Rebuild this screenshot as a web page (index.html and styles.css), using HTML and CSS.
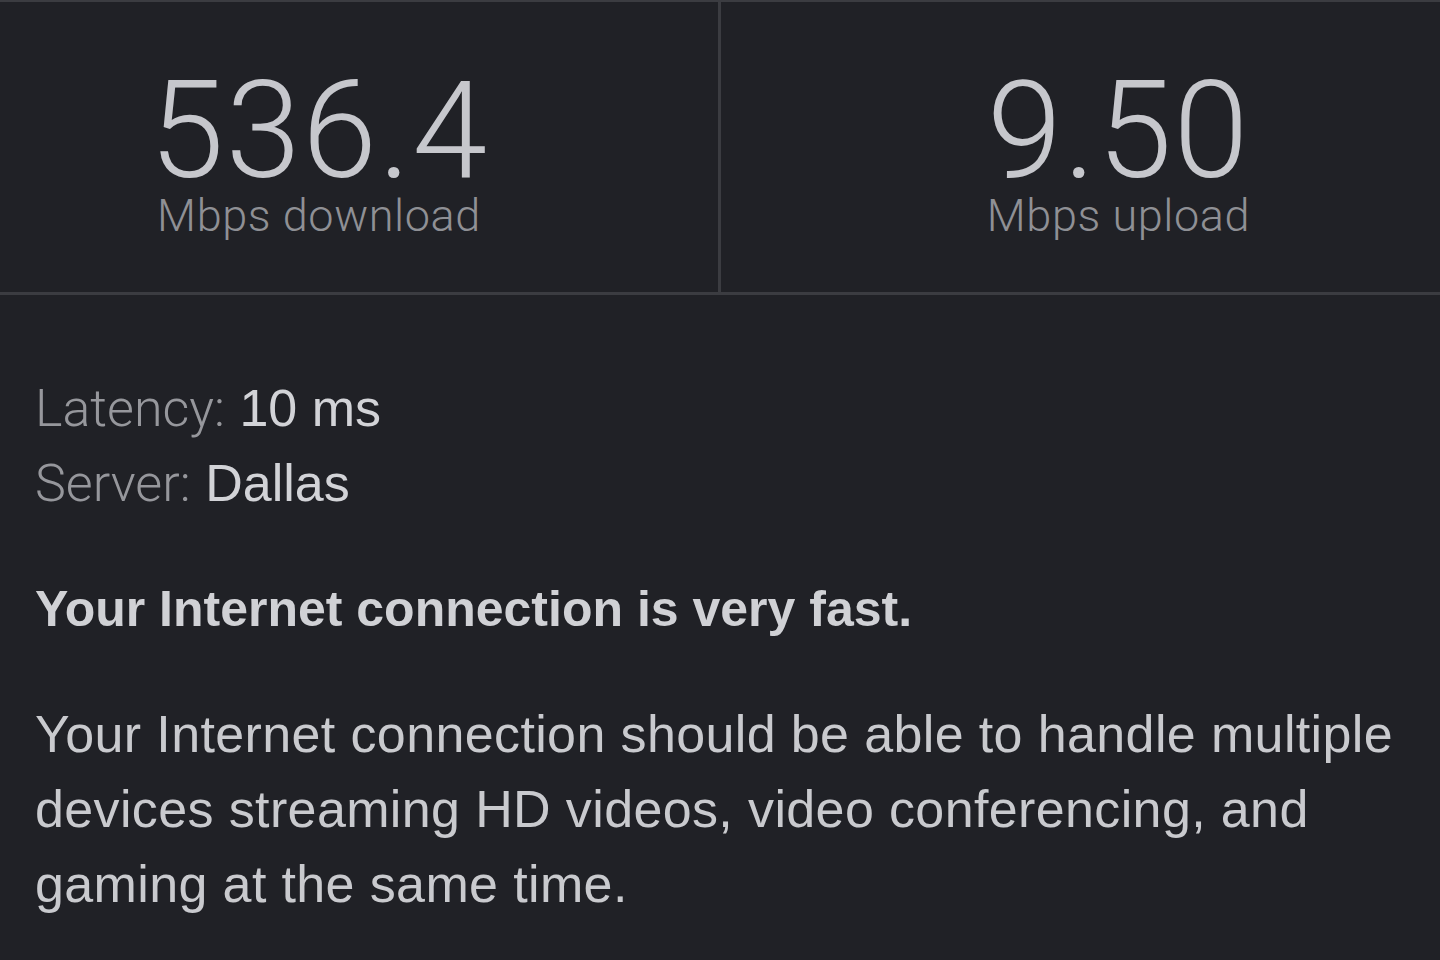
FILE: index.html
```html
<!DOCTYPE html>
<html lang="en">
<head>
<meta charset="utf-8">
<title>Speed test result</title>
<link rel="stylesheet" href="styles.css">
</head>
<body>
<main class="result">
  <section class="stats">
    <div class="stat stat-down">
      <div class="stat-value">536.4</div>
      <div class="stat-label">Mbps download</div>
    </div>
    <div class="stat stat-up">
      <div class="stat-value">9.50</div>
      <div class="stat-label">Mbps upload</div>
    </div>
  </section>
  <section class="details">
    <div class="meta">
      <div class="meta-row"><span class="meta-key">Latency:</span> <span class="meta-val">10 ms</span></div>
      <div class="meta-row"><span class="meta-key">Server:</span> <span class="meta-val">Dallas</span></div>
    </div>
    <h2 class="verdict">Your Internet connection is very fast.</h2>
    <p class="explain">Your Internet connection should be able to handle multiple devices streaming HD videos, video conferencing, and gaming at the same time.</p>
  </section>
</main>
</body>
</html>
```

FILE: styles.css
```css
html, body {
  margin: 0;
  padding: 0;
}

body {
  background: #202126;
  width: 1440px;
  height: 960px;
  overflow: hidden;
  font-family: "Liberation Sans", Arial, Helvetica, sans-serif;
  color: #c9cace;
}

.stats {
  display: grid;
  grid-template-columns: 718px 1fr;
  border-top: 2px solid #3b3c41;
  border-bottom: 3px solid #3b3c41;
}

.stat {
  height: 290px;
  box-sizing: border-box;
  padding-top: 70px;
  display: flex;
  flex-direction: column;
  align-items: center;
}

.stat-down {
  padding-right: 80px;
}

.stat-up {
  border-left: 3px solid #3b3c41;
  padding-left: 76px;
}

.stat-value {
  font-family: Roboto, "Liberation Sans", sans-serif;
  font-weight: 300;
  font-size: 135px;
  line-height: 118px;
  color: #c6c7cc;
  letter-spacing: 1.5px;
}

.stat-label {
  margin-top: 4px;
  font-family: Roboto, "Liberation Sans", sans-serif;
  font-weight: 300;
  font-size: 45px;
  line-height: 44px;
  color: #8f9095;
  letter-spacing: 0.6px;
}

.details {
  padding: 76px 35px 0;
}

.meta {
  font-size: 52px;
  line-height: 75px;
}

.meta-key {
  font-family: Roboto, "Liberation Sans", sans-serif;
  font-weight: 300;
  color: #96979c;
}

.meta-val {
  color: #d2d3d7;
}

.verdict {
  margin: 51px 0 0;
  font-size: 50px;
  line-height: 75px;
  font-weight: 700;
  color: #d0d1d5;
}

.explain {
  margin: 50px 0 0;
  font-size: 52px;
  line-height: 75px;
  letter-spacing: 0.37px;
  color: #c9cace;
  max-width: 1390px;
}
```
